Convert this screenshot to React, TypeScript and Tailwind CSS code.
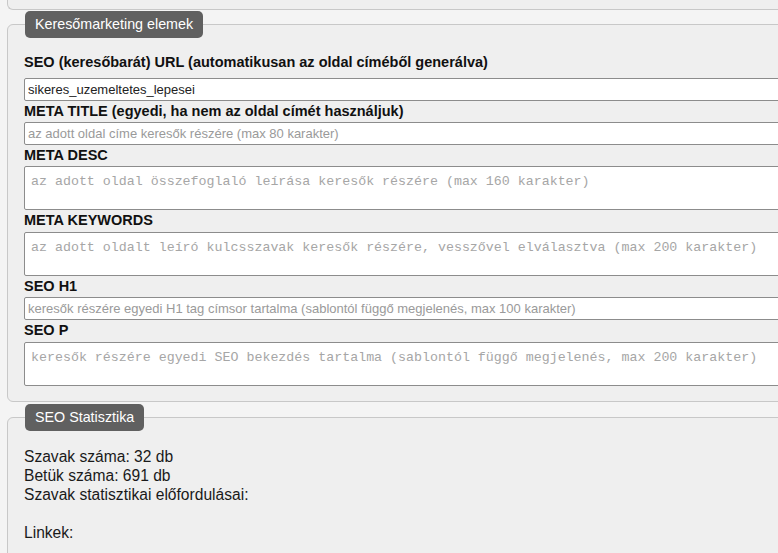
const labelCls = "block text-[14.5px] font-bold leading-[16px] text-[#111]";
const inputCls =
  "block w-full h-[23px] px-[3px] border border-[#8c8c8c] rounded-[2px] bg-white text-[13px] text-[#222] outline-none placeholder:text-[#9a9a9a]";
const areaCls =
  "block w-full h-[44px] px-[6px] pt-[7px] border border-[#8c8c8c] rounded-[2px] bg-white font-['Liberation_Mono',monospace] text-[13.3px] leading-[15px] text-[#222] outline-none resize-none placeholder:text-[#a6a6a6]";

function Legend({ children }: { children: React.ReactNode }) {
  return (
    <legend className="ml-[1px] h-[27px] px-[10px] rounded-[5px] bg-[#606060] text-white text-[14.3px] leading-[27px]">
      {children}
    </legend>
  );
}

export default function App() {
  return (
    <div className="w-[778px] h-[553px] overflow-hidden bg-[#f4f4f4] font-['Liberation_Sans',Arial,sans-serif]">
      {/* end of the previous block */}
      <div className="ml-[7px] w-[900px] h-[10px] border-l border-b border-[#c8c8c8] rounded-bl-[6px] bg-[#efefef]" />

      <fieldset className="mt-[1px] ml-[7px] w-[900px] pl-[16px] pt-[16px] pb-[15px] border border-[#c8c8c8] rounded-[6px] bg-[#efefef]">
        <Legend>Keresőmarketing elemek</Legend>

        <label className={`${labelCls} pb-[8px]`}>
          SEO (keresőbarát) URL (automatikusan az oldal címéből generálva)
        </label>
        <input className={inputCls} defaultValue="sikeres_uzemeltetes_lepesei" />

        <label className={`${labelCls} pt-[2px] pb-[3px]`}>META TITLE (egyedi, ha nem az oldal címét használjuk)</label>
        <input className={inputCls} placeholder="az adott oldal címe keresők részére (max 80 karakter)" />

        <label className={`${labelCls} pt-[2px] pb-[3px]`}>META DESC</label>
        <textarea
          className={areaCls}
          placeholder="az adott oldal összefoglaló leírása keresők részére (max 160 karakter)"
        />

        <label className={`${labelCls} pt-[2px] pb-[4px]`}>META KEYWORDS</label>
        <textarea
          className={areaCls}
          placeholder="az adott oldalt leíró kulcsszavak keresők részére, vesszővel elválasztva (max 200 karakter)"
        />

        <label className={`${labelCls} pt-[2px] pb-[3px]`}>SEO H1</label>
        <input
          className={inputCls}
          placeholder="keresők részére egyedi H1 tag címsor tartalma (sablontól függő megjelenés, max 100 karakter)"
        />

        <label className={`${labelCls} pt-[2px] pb-[4px]`}>SEO P</label>
        <textarea
          className={areaCls}
          placeholder="keresők részére egyedi SEO bekezdés tartalma (sablontól függő megjelenés, max 200 karakter)"
        />
      </fieldset>

      <fieldset className="mt-[2px] ml-[7px] w-[900px] h-[200px] pl-[16px] pt-[16px] border border-[#c8c8c8] rounded-[6px] bg-[#efefef]">
        <Legend>SEO Statisztika</Legend>
        <div className="text-[15.6px] leading-[19px] text-[#1a1a1a]">
          <div>Szavak száma: 32 db</div>
          <div>Betük száma: 691 db</div>
          <div>Szavak statisztikai előfordulásai:</div>
          <div className="h-[19px]" />
          <div>Linkek:</div>
        </div>
      </fieldset>
    </div>
  );
}
